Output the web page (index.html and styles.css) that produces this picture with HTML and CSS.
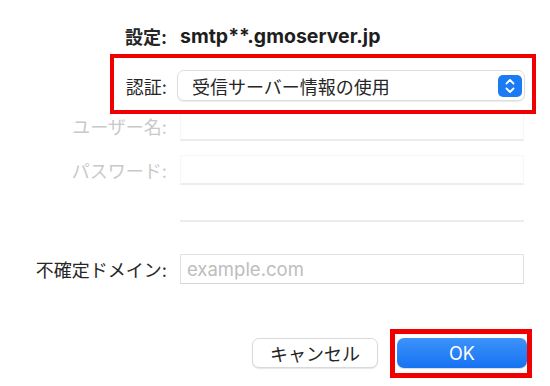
FILE: index.html
```html
<!DOCTYPE html>
<html lang="ja">
<head>
    <meta charset="UTF-8">
    <meta name="viewport" content="width=device-width, initial-scale=1.0">
    <title>SMTP認証</title>
    <link rel="stylesheet" href="styles.css">
</head>
<body>
    <div class="dialog">
        <div class="row title-row">
            <span class="label bold">設定:</span>
            <span class="server">smtp**.gmoserver.jp</span>
        </div>

        <div class="row auth-row marked">
            <span class="label">認証:</span>
            <div class="popup">
                <span>受信サーバー情報の使用</span>
                <svg class="stepper" width="24" height="22" viewBox="0 0 24 22">
                    <rect x="0" y="0" width="24" height="22" rx="5" fill="#1b7bf4"/>
                    <path d="M8.5 8.5 L12 5 L15.5 8.5" fill="none" stroke="#fff" stroke-width="1.8" stroke-linecap="round" stroke-linejoin="round"/>
                    <path d="M8.5 13.5 L12 17 L15.5 13.5" fill="none" stroke="#fff" stroke-width="1.8" stroke-linecap="round" stroke-linejoin="round"/>
                </svg>
            </div>
        </div>

        <div class="row user-row">
            <label class="label disabled" for="user">ユーザー名:</label>
            <input class="field off" id="user" type="text" disabled>
        </div>

        <div class="row pass-row">
            <label class="label disabled" for="pass">パスワード:</label>
            <input class="field off" id="pass" type="password" disabled>
        </div>

        <div class="row extra-row">
            <span class="label"></span>
            <div class="field blank"></div>
        </div>

        <div class="row domain-row">
            <label class="label" for="domain">不確定ドメイン:</label>
            <input class="field" id="domain" type="text" placeholder="example.com">
        </div>

        <div class="buttons">
            <button class="btn cancel" type="button">キャンセル</button>
            <button class="btn ok marked" type="button">OK</button>
        </div>
    </div>
</body>
</html>
```

FILE: styles.css
```css
body {
    margin: 0;
    background: #fff;
    font-family: Inter, "Noto Sans CJK JP", sans-serif;
    color: #262626;
    font-size: 18px;
}

.dialog {
    width: 550px;
    height: 386px;
    padding-top: 24px;
    box-sizing: border-box;
}

.row {
    display: flex;
    align-items: center;
}

.label {
    width: 167px;
    flex-shrink: 0;
    text-align: right;
    margin-right: 13px;
    white-space: nowrap;
}

.bold {
    font-weight: 700;
}

.disabled {
    color: #c9c9c9;
}

.title-row {
    height: 24px;
}

.server {
    font-weight: 700;
    font-size: 19.5px;
    color: #1e1e1e;
}

.marked {
    position: relative;
}

.auth-row {
    margin-top: 22px;
}

.auth-row.marked::after {
    content: "";
    position: absolute;
    left: 110px;
    top: -16px;
    width: 426px;
    height: 60px;
    border: 4px solid #f10000;
    box-sizing: border-box;
}

.popup {
    margin-left: -3px;
    width: 348px;
    height: 31px;
    box-sizing: border-box;
    border: 1px solid #dedede;
    border-radius: 7px;
    box-shadow: 0 1px 1px rgba(0, 0, 0, 0.08);
    display: flex;
    align-items: center;
    justify-content: space-between;
    padding: 0 2px 0 14px;
    background: #fff;
}

.stepper {
    display: block;
}

.field {
    width: 344px;
    height: 30px;
    box-sizing: border-box;
    border: 1px solid #e2e2e2;
    border-bottom-color: #d6d6d6;
    background: #fff;
    padding: 0 6px;
    font-family: Inter, "Noto Sans CJK JP", sans-serif;
    font-size: 18.5px;
    color: #262626;
    outline: none;
}

.field::placeholder {
    color: #bdbdbd;
}

.field.off {
    border-color: #f6f6f6;
    border-bottom: 2px solid #ececec;
}

.field.blank {
    border: none;
    border-bottom: 2px solid #ececec;
    height: 30px;
}

.user-row {
    margin-top: 10px;
}

.pass-row {
    margin-top: 14px;
}

.extra-row {
    margin-top: 7px;
}

.domain-row {
    margin-top: 32px;
}

.buttons {
    margin-top: 54px;
    display: flex;
    justify-content: flex-end;
    gap: 19px;
    padding-right: 23px;
}

.btn {
    height: 30px;
    border-radius: 7px;
    font-family: Inter, "Noto Sans CJK JP", sans-serif;
    font-size: 18px;
    cursor: pointer;
    padding: 0;
}

.cancel {
    width: 126px;
    background: #fff;
    border: 1px solid #d9d9d9;
    box-shadow: 0 1px 1px rgba(0, 0, 0, 0.1);
    color: #262626;
}

.ok {
    width: 130px;
    border: none;
    color: #fff;
    background: linear-gradient(#3d93fb, #1672f1);
    box-shadow: 0 1px 1px rgba(0, 0, 0, 0.15);
}

.ok.marked::after {
    content: "";
    position: absolute;
    left: -7px;
    top: -9px;
    right: -5px;
    bottom: -10px;
    border: 5px solid #f10000;
}
```
